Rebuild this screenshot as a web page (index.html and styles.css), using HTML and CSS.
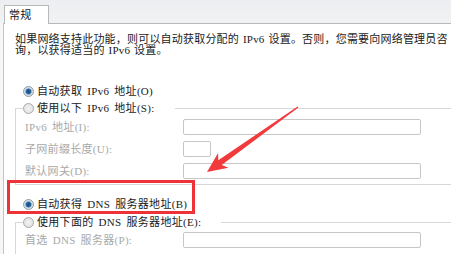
FILE: index.html
```html
<!DOCTYPE html>
<html lang="zh-CN">
<head>
<meta charset="utf-8">
<title>IPv6 属性</title>
<link rel="stylesheet" href="styles.css">
</head>
<body>
<div class="window">
  <div class="tabbar"><div class="tab">常规</div></div>
  <div class="panel">
    <p class="intro">如果网络支持此功能，则可以自动获取分配的 IPv6 设置。否则，您需要向网络管理员咨<br>询，以获得适当的 IPv6 设置。</p>

    <div class="option first"><span class="radio on"></span><span>自动获取 IPv6 地址(O)</span></div>

    <fieldset class="group g1">
      <legend class="option"><span class="radio"></span><span>使用以下 IPv6 地址(S):</span></legend>
      <div class="field"><span class="label">IPv6 地址(I):</span><span class="input wide"></span></div>
      <div class="field"><span class="label">子网前缀长度(U):</span><span class="input short"></span></div>
      <div class="field"><span class="label">默认网关(D):</span><span class="input wide"></span></div>
    </fieldset>

    <div class="option third"><span class="radio on"></span><span>自动获得 DNS 服务器地址(B)</span></div>

    <fieldset class="group g2">
      <legend class="option"><span class="radio"></span><span>使用下面的 DNS 服务器地址(E):</span></legend>
      <div class="field"><span class="label">首选 DNS 服务器(P):</span><span class="input wide"></span></div>
      <div class="field"><span class="label"></span><span class="input wide"></span></div>
    </fieldset>
  </div>

  <div class="highlight"></div>
  <svg class="arrow" width="451" height="254" viewBox="0 0 451 254">
    <polygon points="207,172 228.5,167.7 221.7,165.1 298.4,107.6 297.6,106.4 218.3,160.3 218.1,153.1" fill="#f23a3c"/>
  </svg>
</div>
</body>
</html>
```
FILE: styles.css
```css
html, body {
  margin: 0;
  padding: 0;
}
body {
  width: 451px;
  height: 254px;
  overflow: hidden;
  background: #f6f6f6;
  font-family: "Liberation Serif", "Noto Sans CJK SC", sans-serif;
  font-size: 11px;
  letter-spacing: 0.3px;
  color: #1a1a1a;
}
.window {
  position: relative;
  width: 451px;
  height: 254px;
  overflow: hidden;
}
.tabbar {
  height: 23px;
  display: flex;
  align-items: flex-end;
  padding-left: 4px;
  background: linear-gradient(#eceef1, #f1f2f3);
}
.tab {
  position: relative;
  z-index: 1;
  box-sizing: border-box;
  width: 45px;
  height: 19px;
  margin-bottom: -1px;
  padding: 2px 0 0 4px;
  border: 1px solid #b8b8b8;
  border-bottom: 0;
  background: #fff;
  line-height: 14px;
  color: #111;
}
.panel {
  margin-left: 3px;
  height: 231px;
  border-top: 1px solid #b8b8b8;
  border-left: 1px solid #c4c4c4;
  background: #fff;
  padding-left: 11px;
}
.intro {
  margin: 10px 0 0 0;
  line-height: 11px;
  white-space: nowrap;
  letter-spacing: 0.2px;
  word-spacing: 1px;
}
.option {
  display: flex;
  align-items: center;
  height: 16px;
  line-height: 16px;
  word-spacing: 2px;
  white-space: nowrap;
}
.option.first {
  margin: 27px 0 0 8px;
}
.option.third {
  margin: 11px 0 0 8px;
}
.radio {
  box-sizing: border-box;
  width: 11px;
  height: 11px;
  margin-right: 3px;
  border-radius: 50%;
  border: 1px solid #a9a9a9;
  background: radial-gradient(circle, #f2f2f2 0, #dedede 100%);
  flex: none;
}
.radio.on {
  border-color: #8e9aa6;
  background: radial-gradient(circle, #1d4f86 0, #2a64a0 2.4px, #c9d8e6 3.4px, #e9eef3 100%);
}
.group {
  margin: 0 -80px 0 0;
  min-width: 0;
  padding: 3px 0 5px 7px;
  border: 1px solid #d8d8d8;
}
.group.g1 {
  margin-top: 1px;
}
.group.g2 {
  margin-top: 2px;
  padding-top: 2px;
}
.group legend {
  padding: 0 20px 0 0;
  margin: 0;
}
.field {
  display: grid;
  grid-template-columns: 158px auto;
  align-items: center;
  margin-left: 2px;
  height: 16px;
  margin-bottom: 6px;
}
.field:last-child {
  margin-bottom: 0;
}
.label {
  color: #a8a8a8;
  white-space: nowrap;
  word-spacing: 2px;
  line-height: 16px;
}
.input {
  box-sizing: border-box;
  height: 16px;
  border: 1px solid #c6c6c6;
  border-radius: 2px;
  background: #fff;
}
.input.wide {
  width: 238px;
}
.input.short {
  width: 28px;
}
.highlight {
  position: absolute;
  left: 7px;
  top: 180px;
  width: 188px;
  height: 34px;
  box-sizing: border-box;
  border: 3px solid #ee3338;
}
.arrow {
  position: absolute;
  left: 0;
  top: 0;
  pointer-events: none;
}
```
